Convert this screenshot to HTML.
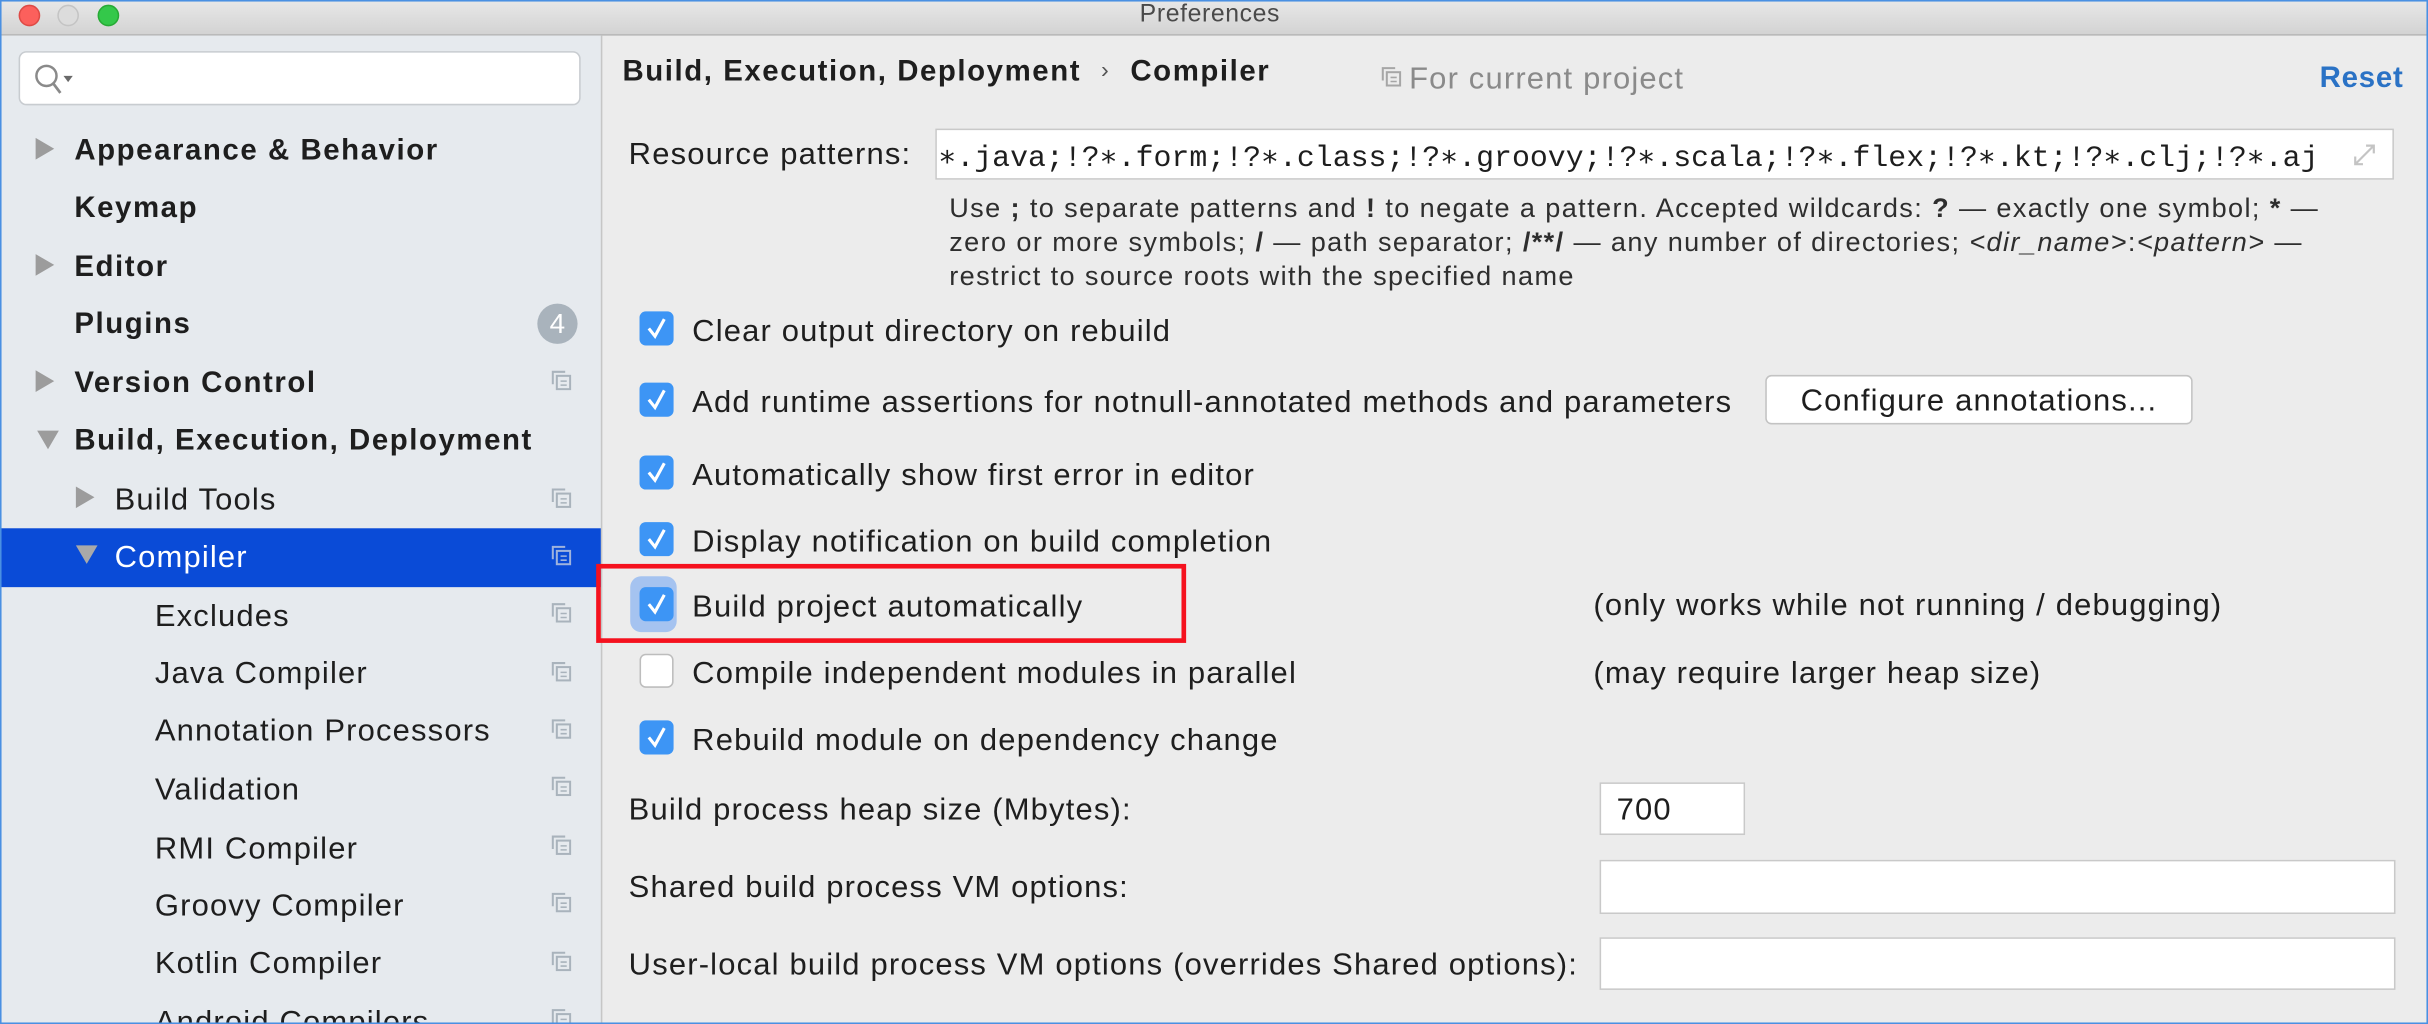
<!DOCTYPE html>
<html><head><meta charset="utf-8"><style>
html,body{margin:0;padding:0;width:2428px;height:1024px;overflow:hidden;background:#ececec}
#w{position:absolute;left:0;top:0;width:1568px;height:661px;transform-origin:0 0;transform:scale(1.54847,1.5492);font-family:"Liberation Sans",sans-serif;color:#1e1e1e;background:#ececec;overflow:hidden}
.a{position:absolute;white-space:nowrap}
.r{font-size:20px;letter-spacing:0.75px}
#tb{left:0;top:0;width:1568px;height:22px;background:linear-gradient(#e8e8e8,#d3d3d3);border-bottom:1px solid #b5b5b5}
.dot{position:absolute;top:3px;width:14px;height:14px;border-radius:50%}
#sb{left:0;top:23px;width:388px;height:638px;background:#e6eaee;border-right:1px solid #c6c6c6}
.ti{position:absolute;font-size:20px;letter-spacing:0.75px;line-height:22px;white-space:nowrap}
.b{font-weight:bold;font-size:19px;letter-spacing:1px}
.tri{position:absolute;width:0;height:0}
.tr{border-top:7px solid transparent;border-bottom:7px solid transparent;border-left:12px solid #9c9c9c}
.td{border-left:7px solid transparent;border-right:7px solid transparent;border-top:12px solid #9c9c9c}
.cp{position:absolute;left:356px;width:13px;height:13px}
.cb{position:absolute;left:413px;width:22px;height:22px;border-radius:4px;background:#3d95f5}
.cb svg{position:absolute;left:4px;top:3px}
.lab{position:absolute;left:447px;font-size:20px;letter-spacing:0.75px;line-height:22px;white-space:nowrap}
.in{position:absolute;background:#fff;border:1px solid #c9c9c9;box-sizing:border-box}
</style></head><body><div id="w">
<div class="a" id="tb"></div>
<div class="dot" style="left:12px;background:#fc605c;border:1px solid #de4a45;box-sizing:border-box"></div>
<div class="dot" style="left:37px;background:#dcdcdc;border:1px solid #c4c4c4;box-sizing:border-box"></div>
<div class="dot" style="left:63px;background:#34c84a;border:1px solid #27aa35;box-sizing:border-box"></div>
<div class="a" style="left:736px;top:1px;font-size:16px;letter-spacing:0.4px;color:#4a4a4a">Preferences</div>

<div class="a" id="sb"></div>
<div class="a" style="left:12px;top:33px;width:363px;height:35px;background:#fff;border:1px solid #c8ccd0;border-radius:5px;box-sizing:border-box"></div>
<svg class="a" style="left:21px;top:40px" width="30" height="24" viewBox="0 0 30 24"><circle cx="9" cy="9" r="6.5" fill="none" stroke="#8a8a8a" stroke-width="1.6"/><path d="M13.5 14 L18 20" stroke="#8a8a8a" stroke-width="1.8"/><path d="M20 9 L26 9 L23 13 Z" fill="#6a6a6a"/></svg>

<div class="tri tr" style="left:23px;top:89px"></div><div class="ti b" style="left:48px;top:87px">Appearance &amp; Behavior</div>
<div class="ti b" style="left:48px;top:124px">Keymap</div>
<div class="tri tr" style="left:23px;top:164px"></div><div class="ti b" style="left:48px;top:162px">Editor</div>
<div class="ti b" style="left:48px;top:199px">Plugins</div>
<div class="a" style="left:347px;top:196px;width:26px;height:26px;border-radius:50%;background:#a9b3bc;color:#fff;font-size:18px;text-align:center;line-height:26px">4</div>
<div class="tri tr" style="left:23px;top:239px"></div><div class="ti b" style="left:48px;top:237px">Version Control</div>
<div class="tri td" style="left:24px;top:278px"></div><div class="ti b" style="left:48px;top:274px">Build, Execution, Deployment</div>
<div class="tri tr" style="left:49px;top:314px"></div><div class="ti" style="left:74px;top:312px">Build Tools</div>
<div class="a" style="left:0;top:341px;width:388px;height:38px;background:#0a4bd7"></div>
<div class="tri td" style="left:49px;top:352px;border-top-color:#a9a9a9"></div><div class="ti" style="left:74px;top:349px;color:#fff">Compiler</div>
<div class="ti" style="left:100px;top:387px">Excludes</div>
<div class="ti" style="left:100px;top:424px">Java Compiler</div>
<div class="ti" style="left:100px;top:461px">Annotation Processors</div>
<div class="ti" style="left:100px;top:499px">Validation</div>
<div class="ti" style="left:100px;top:537px">RMI Compiler</div>
<div class="ti" style="left:100px;top:574px">Groovy Compiler</div>
<div class="ti" style="left:100px;top:611px">Kotlin Compiler</div>
<div class="ti" style="left:100px;top:649px">Android Compilers</div>
<svg width="0" height="0" style="position:absolute"><defs><g id="ci"><path d="M1 9 V1 H9" fill="none" stroke="currentColor" stroke-width="1.3"/><rect x="3.6" y="3.6" width="8.6" height="8.6" fill="none" stroke="currentColor" stroke-width="1.3"/><path d="M6 7 H10 M6 9.6 H10" stroke="currentColor" stroke-width="1"/></g></defs></svg>
<svg class="cp" style="top:239px;color:#a9b3bc"><use href="#ci"/></svg>
<svg class="cp" style="top:315px;color:#a9b3bc"><use href="#ci"/></svg>
<svg class="cp" style="top:352px;color:#9fb3dd"><use href="#ci"/></svg>
<svg class="cp" style="top:389px;color:#a9b3bc"><use href="#ci"/></svg>
<svg class="cp" style="top:427px;color:#a9b3bc"><use href="#ci"/></svg>
<svg class="cp" style="top:464px;color:#a9b3bc"><use href="#ci"/></svg>
<svg class="cp" style="top:501px;color:#a9b3bc"><use href="#ci"/></svg>
<svg class="cp" style="top:539px;color:#a9b3bc"><use href="#ci"/></svg>
<svg class="cp" style="top:576px;color:#a9b3bc"><use href="#ci"/></svg>
<svg class="cp" style="top:614px;color:#a9b3bc"><use href="#ci"/></svg>
<svg class="cp" style="top:651px;color:#a9b3bc"><use href="#ci"/></svg>

<div class="a b" style="left:402px;top:36px">Build, Execution, Deployment</div>
<div class="a" style="left:711px;top:37px;font-size:15px;color:#555">›</div>
<div class="a b" style="left:730px;top:36px">Compiler</div>
<svg class="a" style="left:892px;top:43px;color:#a6a6a6" width="13" height="13"><use href="#ci"/></svg>
<div class="a r" style="left:910px;top:40px;color:#8a8a8a">For current project</div>
<div class="a b" style="left:1498px;top:40px;color:#2a72c5;letter-spacing:0.5px">Reset</div>

<div class="a r" style="left:406px;top:89px">Resource patterns:</div>
<div class="in" style="left:604px;top:83px;width:942px;height:33px;overflow:hidden"><div class="a" style="left:1px;top:5px;font-family:'Liberation Mono',monospace;font-size:19.3px">∗.java;!?∗.form;!?∗.class;!?∗.groovy;!?∗.scala;!?∗.flex;!?∗.kt;!?∗.clj;!?∗.aj</div>
<svg class="a" style="left:912px;top:6px" width="20" height="20"><path d="M4 16 L16 4 M11 4 H16 V9 M4 11 V16 H9" fill="none" stroke="#c4c4c4" stroke-width="1.4"/></svg></div>
<div class="a" style="left:613px;top:123px;font-size:17.5px;letter-spacing:0.9px;line-height:22px;color:#2e2e2e">Use <b>;</b> to separate patterns and <b>!</b> to negate a pattern. Accepted wildcards: <b>?</b> — exactly one symbol; <b>*</b> —<br>zero or more symbols; <b>/</b> — path separator; <b>/**/</b> — any number of directories; <i>&lt;dir_name&gt;</i>:<i>&lt;pattern&gt;</i> —<br>restrict to source roots with the specified name</div>

<svg width="0" height="0" style="position:absolute"><defs><path id="ck" d="M2 8 L6 13 L12 2" fill="none" stroke="#fff" stroke-width="2"/></defs></svg>
<div class="cb" style="top:201px"><svg width="14" height="16"><use href="#ck"/></svg></div>
<div class="lab" style="top:203px">Clear output directory on rebuild</div>
<div class="cb" style="top:247px"><svg width="14" height="16"><use href="#ck"/></svg></div>
<div class="lab" style="top:249px">Add runtime assertions for notnull-annotated methods and parameters</div>
<div class="a r" style="left:1140px;top:242px;width:276px;height:32px;background:#fff;border:1px solid #c3c3c3;border-radius:4px;box-sizing:border-box;text-align:center;line-height:32px">Configure annotations...</div>
<div class="cb" style="top:294px"><svg width="14" height="16"><use href="#ck"/></svg></div>
<div class="lab" style="top:296px">Automatically show first error in editor</div>
<div class="cb" style="top:337px"><svg width="14" height="16"><use href="#ck"/></svg></div>
<div class="lab" style="top:339px">Display notification on build completion</div>
<div class="a" style="left:407px;top:372px;width:30px;height:36px;border-radius:7px;background:#a5c3f0"></div>
<div class="cb" style="top:379px"><svg width="14" height="16"><use href="#ck"/></svg></div>
<div class="lab" style="top:381px">Build project automatically</div>
<div class="a" style="left:385px;top:364px;width:381px;height:51px;border:3px solid #f5111e;box-sizing:border-box"></div>
<div class="a r" style="left:1029px;top:380px">(only works while not running / debugging)</div>
<div class="cb" style="top:422px;background:#fff;border:1px solid #bdbdbd;box-sizing:border-box"></div>
<div class="lab" style="top:424px">Compile independent modules in parallel</div>
<div class="a r" style="left:1029px;top:424px">(may require larger heap size)</div>
<div class="cb" style="top:465px"><svg width="14" height="16"><use href="#ck"/></svg></div>
<div class="lab" style="top:467px">Rebuild module on dependency change</div>

<div class="a r" style="left:406px;top:512px">Build process heap size (Mbytes):</div>
<div class="in" style="left:1033px;top:505px;width:94px;height:34px"><div class="a r" style="left:10px;top:6px">700</div></div>
<div class="a r" style="left:406px;top:562px">Shared build process VM options:</div>
<div class="in" style="left:1033px;top:555px;width:514px;height:35px"></div>
<div class="a r" style="left:406px;top:612px">User-local build process VM options (overrides Shared options):</div>
<div class="in" style="left:1033px;top:605px;width:514px;height:34px"></div>
<div class="a" style="left:0;top:0;width:1568px;height:661px;border:1px solid #4a90e2;box-sizing:border-box"></div>
</div></body></html>
